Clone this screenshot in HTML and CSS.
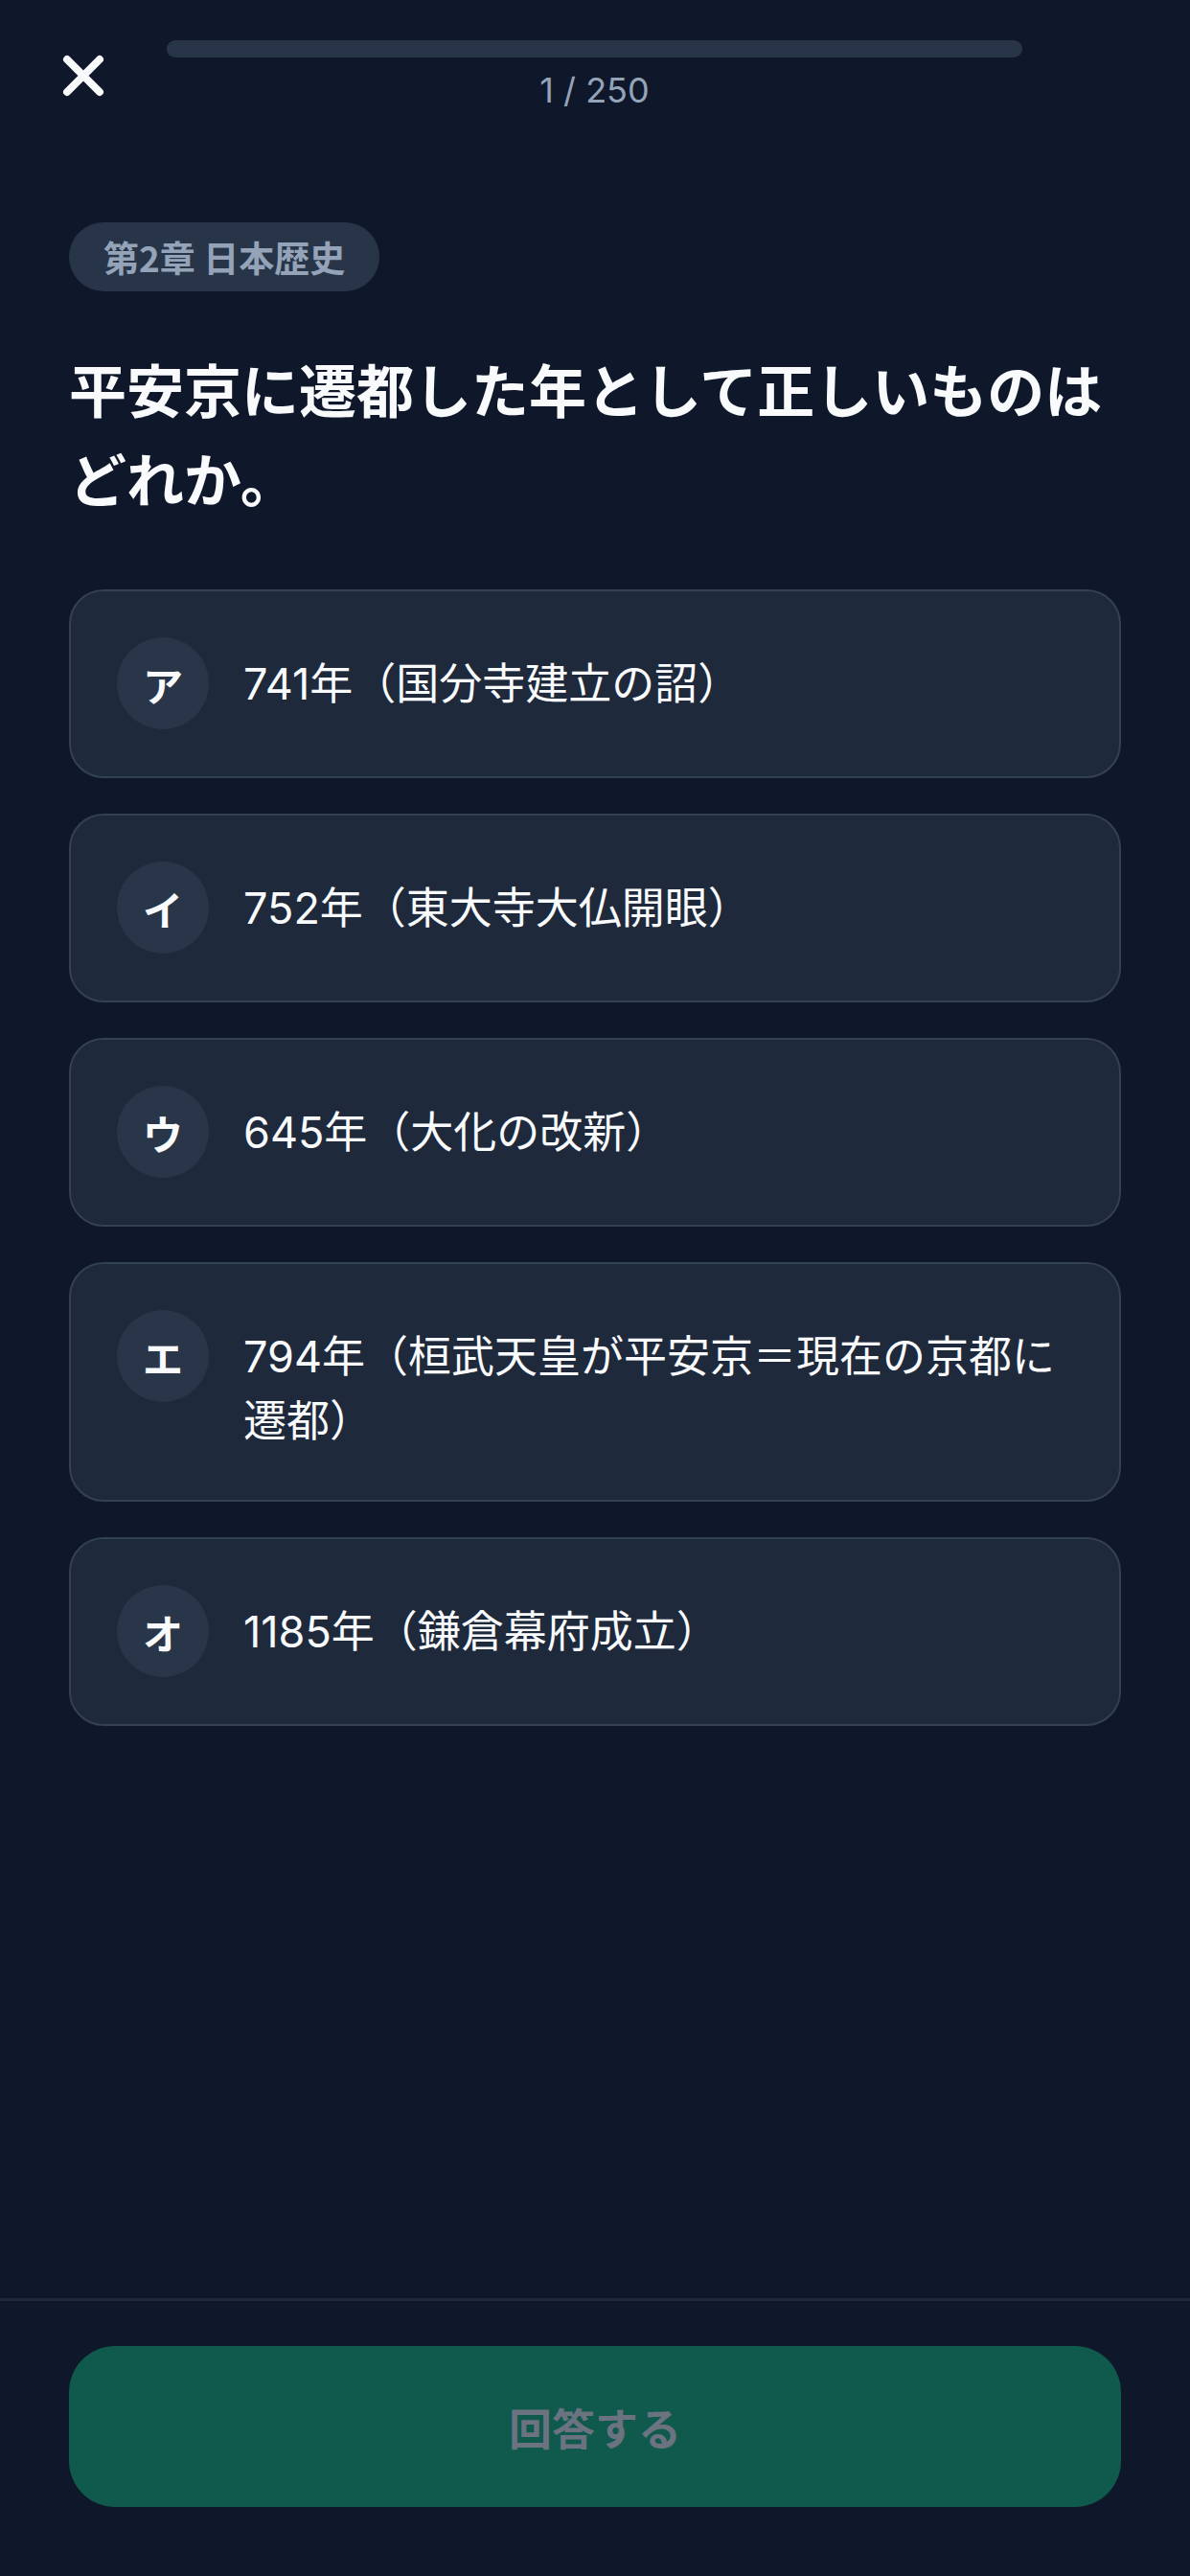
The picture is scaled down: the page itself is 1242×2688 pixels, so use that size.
FILE: index.html
```html
<!DOCTYPE html>
<html lang="ja">
<head>
<meta charset="utf-8">
<title>クイズ</title>
<link rel="stylesheet" href="styles.css">
</head>
<body>
<div class="screen">
  <header class="header">
    <div class="close-col">
      <button class="close" aria-label="閉じる">
        <svg viewBox="0 0 48 48" width="48" height="48"><path d="M7 7 L41 41 M41 7 L7 41" stroke="#f8fafc" stroke-width="8" stroke-linecap="round" fill="none"/></svg>
      </button>
    </div>
    <div class="progress-col">
      <div class="track"><div class="fill" style="width:0.4%"></div></div>
      <div class="counter">1 / 250</div>
    </div>
    <div class="spacer-col"></div>
  </header>

  <main class="main">
    <span class="tag">第2章 日本歴史</span>
    <h1 class="question">平安京に遷都した年として正しいものはどれか。</h1>
    <ul class="options">
      <li class="option"><span class="badge">ア</span><span class="label">741年（国分寺建立の詔）</span></li>
      <li class="option"><span class="badge">イ</span><span class="label">752年（東大寺大仏開眼）</span></li>
      <li class="option"><span class="badge">ウ</span><span class="label">645年（大化の改新）</span></li>
      <li class="option"><span class="badge">エ</span><span class="label">794年（桓武天皇が平安京＝現在の京都に遷都）</span></li>
      <li class="option"><span class="badge">オ</span><span class="label">1185年（鎌倉幕府成立）</span></li>
    </ul>
  </main>

  <footer class="footer">
    <button class="submit" disabled>回答する</button>
  </footer>
</div>
</body>
</html>
```

FILE: styles.css
```css
* { box-sizing: border-box; }

html, body {
  margin: 0;
  padding: 0;
  background: #0f172a;
}

body {
  font-family: "Inter", "Noto Sans CJK JP", "Noto Sans", sans-serif;
  color: #f8fafc;
}

.screen {
  width: 1242px;
  min-height: 2688px;
  display: flex;
  flex-direction: column;
}

.header {
  display: grid;
  grid-template-columns: 174px 1fr 175px;
  padding-top: 42px;
}

.close-col {
  padding-left: 63px;
}

.close {
  display: block;
  margin-top: 13px;
  width: 48px;
  height: 48px;
  padding: 0;
  border: 0;
  background: none;
}

.close svg { display: block; }

.progress-col {
  display: flex;
  flex-direction: column;
  align-items: center;
}

.track {
  width: 100%;
  height: 18px;
  border-radius: 9px;
  background: #283548;
  overflow: hidden;
}

.fill {
  height: 100%;
  background: #283548;
}

.counter {
  margin-top: 13px;
  font-size: 36px;
  line-height: 42px;
  color: #94a3b8;
}

.main {
  flex: 1;
  padding: 117px 72px 0;
  display: flex;
  flex-direction: column;
  align-items: flex-start;
}

.tag {
  display: inline-flex;
  align-items: center;
  height: 72px;
  padding: 0 36px;
  border-radius: 36px;
  background: #283548;
  color: #94a3b8;
  font-size: 37px;
  font-weight: 700;
  font-family: "Noto Sans CJK JP", sans-serif;
}

.question {
  margin: 54px 0 0;
  font-family: "Noto Sans CJK JP", sans-serif;
  font-size: 60px;
  line-height: 93px;
  font-weight: 700;
  color: #f8fafc;
}

.options {
  list-style: none;
  margin: 71px 0 0;
  padding: 0;
  width: 100%;
  display: flex;
  flex-direction: column;
  gap: 37px;
}

.option {
  display: flex;
  align-items: flex-start;
  gap: 36px;
  padding: 48px 48px 49px;
  border: 2px solid #334155;
  border-radius: 36px;
  background: #1e293b;
}

.badge {
  flex: none;
  width: 96px;
  height: 96px;
  border-radius: 50%;
  background: #293548;
  display: flex;
  align-items: center;
  justify-content: center;
  font-family: "Noto Sans CJK JP", sans-serif;
  font-size: 42px;
  font-weight: 700;
  color: #f8fafc;
}

.label {
  padding-top: 15px;
  font-size: 45px;
  line-height: 67px;
  color: #f8fafc;
}

.footer {
  border-top: 3px solid #1e293b;
  padding: 47px 72px 72px;
}

.submit {
  display: flex;
  align-items: center;
  justify-content: center;
  width: 100%;
  height: 168px;
  border: 0;
  border-radius: 48px;
  background: #0f594d;
  color: #6b7280;
  font-family: "Noto Sans CJK JP", sans-serif;
  font-size: 45px;
  font-weight: 700;
}
```
